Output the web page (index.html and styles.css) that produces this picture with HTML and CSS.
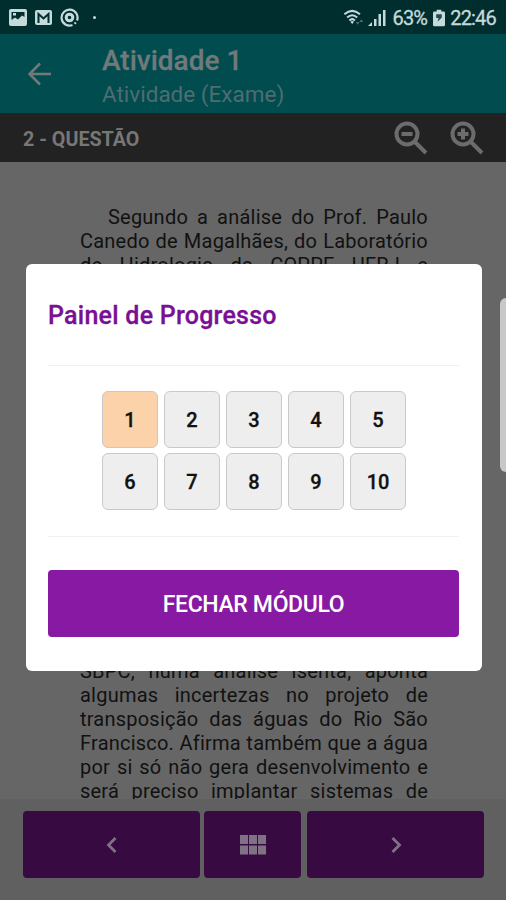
FILE: index.html
```html
<!DOCTYPE html>
<html lang="pt-BR">

<head>
  <meta charset="utf-8">
  <title>Atividade 1</title>
  <link rel="stylesheet" href="styles.css">
</head>

<body>
  <div class="screen">
    <div class="status-bar">
      <svg class="status-icon image" width="18" height="17" viewBox="0 0 18 17">
        <path fill-rule="evenodd" d="M2 0h14a2 2 0 0 1 2 2v13a2 2 0 0 1-2 2H2a2 2 0 0 1-2-2V2a2 2 0 0 1 2-2zM2.500 3v8l3.500-2.500 3 2 4-4 2.500 1.500V3zM4 4h3v2.500H4z"/>
      </svg>
      <svg class="status-icon mail" width="17" height="15" viewBox="0 0 17 15">
        <rect width="17" height="15" rx="2"/>
        <path class="cut" d="M3.500 13V4L8.500 8.500 13.500 4v9"/>
      </svg>
      <svg class="status-icon target" width="19" height="19" viewBox="0 0 19 19">
        <path class="line" d="M12.500 17A8 8 0 1 1 17 12.500M15.800 14.500l-1.200 1.200"/>
        <circle class="line thick" cx="9.500" cy="9.500" r="3.300"/>
      </svg>
      <span class="status-dot"></span>
      <div class="status-right">
        <svg class="status-icon" width="22" height="17" viewBox="0 0 24 18">
          <path class="line" d="M1.500 5.500q8.500-7.500 17 0M4.500 9q5.500-5 11 0M7 12.200q3-2.800 6 0"/>
          <path d="M8 13.500q2-1.500 4 0l-2 2.500z"/>
          <path class="faint" d="M14 14h4l-2 3zM18 14l2-3 2 3z"/>
        </svg>
        <svg class="status-icon signal" width="19" height="17" viewBox="0 0 19 17">
          <path d="M0 17l4-4v4zM6 10h2.500v7H6zM10.500 5H13v12h-2.500zM15 1h2.500v16H15z"/>
        </svg>
        <span class="battery-text">63%</span>
        <svg class="status-icon battery" width="12" height="18" viewBox="0 0 13 18">
          <path d="M4 0h5v2h2.500A1.500 1.500 0 0 1 13 3.500v13a1.500 1.500 0 0 1-1.500 1.500h-10A1.500 1.500 0 0 1 0 16.500v-13A1.500 1.500 0 0 1 1.500 2H4z"/>
          <path class="bolt" d="M3.500 5h6v3.500L5 13l1-4H3.500z"/>
        </svg>
        <span class="clock">22:46</span>
      </div>
    </div>

    <header class="app-bar">
      <svg class="back" width="24" height="24" viewBox="0 0 24 24">
        <path d="M23 12H2M12 1.500L1.500 12 12 22.500"/>
      </svg>
      <div>
        <h1 class="app-title">Atividade 1</h1>
        <div class="app-subtitle">Atividade (Exame)</div>
      </div>
    </header>

    <div class="question-bar">
      <span class="question-title">2 - QUESTÃO</span>
      <svg class="zoom-icon" width="34" height="34" viewBox="0 0 34 34">
        <circle cx="13" cy="13" r="10.500"/>
        <path d="M7.500 13h11M20.500 20.500L32 32"/>
      </svg>
      <svg class="zoom-icon" width="34" height="34" viewBox="0 0 34 34">
        <circle cx="13" cy="13" r="10.500"/>
        <path d="M7.500 13h11M13 7.500v11M20.500 20.500L32 32"/>
      </svg>
    </div>

    <main class="question">
      <p class="question-text indent">Segundo a análise do Prof. Paulo<br>Canedo de Magalhães, do Laboratório<br>de Hidrologia da COPPE UFRJ e</p>
      <p class="question-text">SBPC, numa análise isenta, aponta<br>algumas incertezas no projeto de<br>transposição das águas do Rio São<br>Francisco. Afirma também que a água<br>por si só não gera desenvolvimento e<br>será preciso implantar sistemas de</p>
    </main>

    <footer class="nav">
      <button class="nav-button">
        <svg width="12" height="18" viewBox="0 0 12 18"><path class="chevron" d="M9.500 2L2.500 9l7 7"/></svg>
      </button>
      <button class="nav-button menu">
        <svg width="26" height="20" viewBox="0 0 26 20">
          <path class="tiles" d="M0 0h8v9H0zM9 0h8v9H9zM18 0h8v9h-8zM0 10.500h8v9H0zM9 10.500h8v9H9zM18 10.500h8v9h-8z"/>
        </svg>
      </button>
      <button class="nav-button">
        <svg width="12" height="18" viewBox="0 0 12 18"><path class="chevron" d="M2.500 2l7 7-7 7"/></svg>
      </button>
    </footer>
  </div>

  <div class="edge-handle"></div>

  <div class="modal">
    <h2 class="modal-title">Painel de Progresso</h2>
    <div class="progress-grid">
      <span class="step current">1</span>
      <span class="step">2</span>
      <span class="step">3</span>
      <span class="step">4</span>
      <span class="step">5</span>
      <span class="step">6</span>
      <span class="step">7</span>
      <span class="step">8</span>
      <span class="step">9</span>
      <span class="step">10</span>
    </div>
    <button class="close-button">FECHAR MÓDULO</button>
  </div>
</body>

</html>
```

FILE: styles.css
```css
* {
  box-sizing: border-box;
}
body {
  margin: 0;
  font-family: Roboto, sans-serif;
}
h1, h2, p {
  margin: 0;
}
button {
  border: 0;
  padding: 0;
  font-family: inherit;
}

.screen {
  display: flex;
  flex-direction: column;
  width: 506px;
  height: 900px;
  background: #666;
  overflow: hidden;
}

/* Status bar */
.status-bar {
  display: flex;
  align-items: center;
  flex: none;
  height: 34px;
  padding: 1px 10px 0 9px;
  background: #002d2e;
  color: #c5dadb;
}
.status-icon {
  fill: #c5dadb;
}
.status-icon .line {
  fill: none;
  stroke: #c5dadb;
  stroke-width: 2.200;
}
.status-icon .thick {
  stroke-width: 3;
}
.status-icon .cut {
  fill: none;
  stroke: #002d2e;
  stroke-width: 2;
}
.status-icon .faint {
  fill: #527173;
}
.status-icon .bolt {
  fill: #23494b;
}
.mail {
  margin-left: 8px;
}
.target {
  margin-left: 8px;
}
.status-dot {
  width: 3px;
  height: 3px;
  margin-left: 14px;
  border-radius: 50%;
  background: #c5dadb;
}
.status-right {
  display: flex;
  align-items: center;
  margin-left: auto;
  font-size: 20px;
  letter-spacing: -0.800px;
  -webkit-text-stroke: 0.300px;
}
.signal {
  margin-left: 3px;
}
.battery-text {
  margin-left: 5px;
}
.battery {
  margin: 0 5px 0 6px;
}

/* Header */
.app-bar {
  display: flex;
  flex: none;
  height: 79px;
  padding: 11px 0 0 28px;
  background: #004c4e;
  color: #71797b;
}
.back {
  margin: 17px 50px 0 0;
  fill: none;
  stroke: #71797b;
  stroke-width: 2.500;
}
.app-title {
  font-size: 28px;
  font-weight: 500;
  line-height: 32px;
  -webkit-text-stroke: 0.300px;
}
.app-subtitle {
  font-size: 22.500px;
  line-height: 35px;
  color: #4f6d70;
}
.question-bar {
  display: flex;
  align-items: center;
  flex: none;
  height: 49px;
  padding: 0 22px 0 23px;
  background: #222;
  color: #777;
}
.question-title {
  flex-grow: 1;
  padding-top: 3px;
  font-size: 19.700px;
  font-weight: 700;
}
.zoom-icon {
  margin-left: 22px;
  fill: none;
  stroke: #6c6c6c;
  stroke-width: 4;
}

/* Question */
.question {
  display: flex;
  flex-direction: column;
  justify-content: space-between;
  height: 637px;
  padding: 43px 78px 0 80px;
  overflow: hidden;
}
.question-text {
  font-size: 20px;
  line-height: 23.900px;
  letter-spacing: 0.220px;
  text-align: justify;
  text-align-last: justify;
  white-space: nowrap;
  color: #111;
}
.question-text:last-child {
  margin-bottom: -4.500px;
}
.indent {
  padding-top: 1px;
  text-indent: 28px;
}

.nav {
  display: grid;
  grid-template-columns: 177px 97px 177px;
  column-gap: 5px;
  flex: none;
  height: 101px;
  padding: 12px 22px 22px 23px;
  background: #606060;
}
.nav-button {
  display: flex;
  align-items: center;
  justify-content: center;
  border-radius: 4px;
  background: #380a42;
}
.menu {
  margin: 0 1px 0 -1px;
}
.chevron {
  fill: none;
  stroke: #807284;
  stroke-width: 2.800;
}
.tiles {
  fill: #807284;
}

.edge-handle {
  position: absolute;
  top: 298px;
  right: 0;
  width: 6px;
  height: 174px;
  border-radius: 6px 0 0 6px;
  background: #c8c8c8;
}

/* Progress dialog */
.modal {
  position: absolute;
  top: 264px;
  left: 26px;
  width: 456px;
  height: 407px;
  padding: 0 23px 0 22px;
  border-radius: 6px;
  background: #fff;
}
.modal-title {
  height: 101px;
  padding-top: 36px;
  font-size: 25px;
  font-weight: 500;
  letter-spacing: 0.250px;
  line-height: 32px;
  color: #790f94;
  -webkit-text-stroke: 0.300px;
}
.progress-grid {
  display: grid;
  grid-template-columns: repeat(5, 56px);
  grid-auto-rows: 57px;
  gap: 5px 6px;
  justify-content: center;
  height: 172px;
  padding: 25px 0 0 1px;
  border: solid #f0f0f0;
  border-width: 1px 0;
}
.step {
  display: flex;
  align-items: center;
  justify-content: center;
  border: 1px solid #c9c9c9;
  border-radius: 6px;
  background: #eee;
  font-size: 20px;
  font-weight: 500;
  color: #111;
  -webkit-text-stroke: 0.300px;
}
.current {
  background: #fcd2ab;
}
.close-button {
  display: block;
  width: 100%;
  height: 67px;
  margin-top: 33px;
  padding-top: 1px;
  border-radius: 4px;
  background: #8719a3;
  color: #fff;
  font-size: 23px;
  font-weight: 500;
  letter-spacing: -0.350px;
}
```
